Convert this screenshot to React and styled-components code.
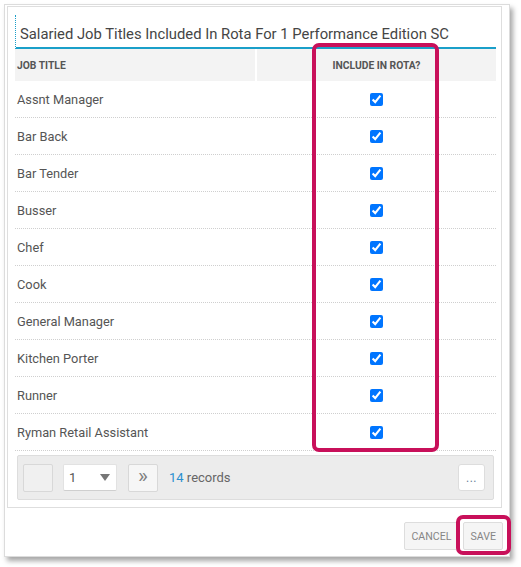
import React from 'react';
import styled, { createGlobalStyle } from 'styled-components';

const GlobalStyle = createGlobalStyle`
  html, body {
    margin: 0;
    padding: 0;
    background: #ffffff;
    font-family: Roboto, "Liberation Sans", Arial, sans-serif;
  }
`;

const Page = styled.div`
  position: relative;
  width: 521px;
  height: 567px;
  padding: 4px 0 0 4px;
  box-sizing: border-box;
`;

const Dialog = styled.div`
  width: 506px;
  height: 553px;
  box-sizing: border-box;
  border: 1px solid #dcdcdc;
  background: #fff;
  box-shadow: 3px 4px 5px rgba(0, 0, 0, 0.35);
  display: flex;
  flex-direction: column;
`;

const Panel = styled.div`
  margin: 1px 7px 0 2px;
  border: 1px solid #dedede;
  padding: 8px 5px 7px 7px;
`;

const Title = styled.h2`
  margin: 0;
  height: 34px;
  box-sizing: border-box;
  padding: 10px 0 0 4px;
  border-left: 1px dotted #1a9fc9;
  border-bottom: 2px solid #1a9fc9;
  font-size: 14.8px;
  font-weight: 400;
  color: #454545;
  white-space: nowrap;
`;

const HeadRow = styled.div`
  display: grid;
  grid-template-columns: 240px 1fr;
  gap: 2px;
  height: 32px;
`;

const HeadCell = styled.div`
  background: #f3f3f3;
  display: flex;
  align-items: center;
  justify-content: ${({ $center }) => ($center ? 'center' : 'flex-start')};
  padding-left: ${({ $center }) => ($center ? '0' : '2px')};
  font-size: 10.3px;
  font-weight: 700;
  color: #555;
  text-transform: uppercase;
`;

const Row = styled.div`
  display: grid;
  grid-template-columns: 242px 1fr;
  height: 37px;
  box-sizing: border-box;
  border-bottom: 1px dotted #cfcfcf;
  align-items: center;
`;

const NameCell = styled.div`
  padding-left: 2px;
  font-size: 12.8px;
  color: #555;
`;

const CheckCell = styled.div`
  display: flex;
  justify-content: center;
  align-items: center;
`;

const Check = styled.input`
  margin: 0;
  width: 13px;
  height: 13px;
`;

const Pager = styled.div`
  margin: 4px 2px 0;
  height: 45px;
  box-sizing: border-box;
  background: #ececec;
  border: 1px solid #dddddd;
  border-radius: 2px;
  display: flex;
  align-items: center;
  padding: 0 8px 0 5px;
`;

const PageButton = styled.div`
  width: 30px;
  height: 28px;
  box-sizing: border-box;
  background: ${({ $light }) => ($light ? '#f6f6f6' : '#f0f0f0')};
  border: 1px solid #d8d8d8;
  border-radius: 2px;
  display: flex;
  align-items: center;
  justify-content: center;
  color: #808080;
  font-size: 21px;
  line-height: 1;
  padding-bottom: 2px;
  margin-right: ${({ $gap }) => $gap || 0}px;
`;

const SelectBox = styled.div`
  width: 54px;
  height: 27px;
  box-sizing: border-box;
  background: #fff;
  border: 1px solid #e2e2e2;
  border-bottom-color: #cfcfcf;
  border-radius: 2px;
  display: flex;
  align-items: center;
  justify-content: space-between;
  padding: 0 6px 0 5px;
  margin-right: 11px;
  font-size: 13px;
  color: #555;
`;

const Caret = styled.span`
  width: 0;
  height: 0;
  border-left: 5px solid transparent;
  border-right: 5px solid transparent;
  border-top: 7px solid #777;
`;

const Records = styled.div`
  margin-left: 11px;
  font-size: 13px;
  color: #666;
  flex: 1;
`;

const Count = styled.span`
  color: #2a8fd0;
`;

const MoreButton = styled.div`
  width: 27px;
  height: 27px;
  box-sizing: border-box;
  background: #fff;
  border: 1px solid #dddddd;
  border-radius: 3px;
  display: flex;
  align-items: center;
  justify-content: center;
  font-size: 12px;
  color: #6a7f9a;
  letter-spacing: 0.5px;
`;

const Footer = styled.div`
  display: flex;
  justify-content: flex-end;
  gap: 5px;
  padding: 14px 6px 0 0;
`;

const FooterButton = styled.div`
  height: 28px;
  box-sizing: border-box;
  padding: 0 6px;
  background: #f5f5f5;
  border: 1px solid #dddddd;
  border-radius: 2px;
  display: flex;
  align-items: center;
  font-size: 10.6px;
  color: #858585;
  text-transform: uppercase;
`;

const Highlight = styled.div`
  position: absolute;
  box-sizing: border-box;
  border: 4px solid #c8105a;
  border-radius: 7px;
  pointer-events: none;
`;

const jobTitles = [
  'Assnt Manager',
  'Bar Back',
  'Bar Tender',
  'Busser',
  'Chef',
  'Cook',
  'General Manager',
  'Kitchen Porter',
  'Runner',
  'Ryman Retail Assistant',
];

const App = () => {
  return (
    <>
      <GlobalStyle />
      <Page>
        <Dialog>
          <Panel>
            <Title>Salaried Job Titles Included In Rota For 1 Performance Edition SC</Title>
            <HeadRow>
              <HeadCell>Job Title</HeadCell>
              <HeadCell $center>Include In Rota?</HeadCell>
            </HeadRow>
            {jobTitles.map((title) => (
              <Row key={title}>
                <NameCell>{title}</NameCell>
                <CheckCell>
                  <Check type="checkbox" defaultChecked />
                </CheckCell>
              </Row>
            ))}
            <Pager>
              <PageButton $gap={10} />
              <SelectBox>
                1 <Caret />
              </SelectBox>
              <PageButton $light>»</PageButton>
              <Records>
                <Count>14</Count> records
              </Records>
              <MoreButton>...</MoreButton>
            </Pager>
          </Panel>
          <Footer>
            <FooterButton>Cancel</FooterButton>
            <FooterButton>Save</FooterButton>
          </Footer>
        </Dialog>
        <Highlight style={{ left: 312, top: 43, width: 127, height: 409 }} />
        <Highlight style={{ left: 456, top: 515, width: 55, height: 40 }} />
      </Page>
    </>
  );
};

export default App;
